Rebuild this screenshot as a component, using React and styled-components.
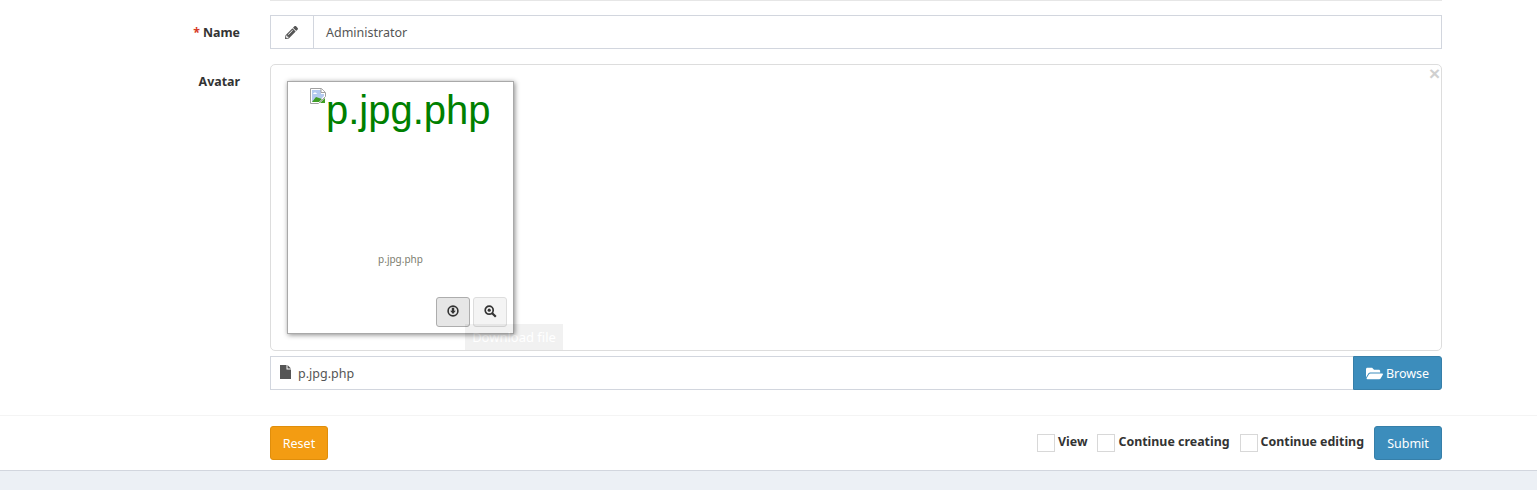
import React from "react";
import styled, { createGlobalStyle } from "styled-components";
import { FaPencilAlt, FaFolderOpen } from "react-icons/fa";

const Global = createGlobalStyle`
  html, body { margin: 0; padding: 0; background: #ecf0f5; }
  body { font-family: "Noto Sans", "Liberation Sans", sans-serif; font-size: 13px; color: #333; overflow: hidden; }
`;

const Panel = styled.form`
  background: #fff;
  height: 470px;
  border-bottom: 1px solid #d2d6de;
  display: flex;
  flex-direction: column;
`;
const Body = styled.div`
  height: 415px;
  padding-right: 95px;
  box-sizing: border-box;
  display: flex;
  flex-direction: column;
`;
const TopRule = styled.div`
  height: 1px;
  margin-left: 270px;
  background: #e6e6e6;
  margin-bottom: 14px;
`;
const Row = styled.div`
  display: flex;
  margin-bottom: 15px;
`;
const Label = styled.label`
  width: 240px;
  flex: none;
  margin-right: 30px;
  text-align: right;
  font-weight: 700;
  font-size: 12.4px;
  line-height: 18px;
  padding-top: ${p => p.$top}px;
  color: #333;
`;
const Star = styled.span`
  color: #d73925;
  margin-right: 3px;
`;
const Field = styled.div`
  flex: 1;
  min-width: 0;
  display: flex;
  flex-direction: column;
`;
const InputGroup = styled.div`
  display: flex;
  height: 34px;
  box-sizing: border-box;
  border: 1px solid #d2d6de;
`;
const Addon = styled.span`
  width: 43px;
  box-sizing: border-box;
  padding-right: 2px;
  flex: none;
  display: flex;
  align-items: center;
  justify-content: center;
  border-right: 1px solid #d2d6de;
  color: #555;
  font-size: 13px;
`;
const InputText = styled.span`
  padding-left: 12px;
  line-height: 33px;
  color: #555;
  font-size: 12.5px;
`;
const Preview = styled.div`
  position: relative;
  height: 287px;
  box-sizing: border-box;
  border: 1px solid #ddd;
  border-radius: 5px;
  padding: 16px 0 0 16px;
  margin-bottom: 5px;
`;
const Close = styled.span`
  position: absolute;
  top: -2px;
  right: 1px;
  font-family: "Liberation Sans", sans-serif;
  font-size: 19px;
  font-weight: 700;
  line-height: 15px;
  color: #d0d0d0;
  height: 15px;
  display: block;
  padding-top: 3px;
`;
const Thumb = styled.div`
  width: 227px;
  height: 253px;
  box-sizing: border-box;
  background: #fff;
  border: 1px solid #a9a9a9;
  box-shadow: 1px 1px 5px 0 #8c8c8c;
  position: relative;
  display: flex;
  flex-direction: column;
  align-items: center;
`;
const BrokenWrap = styled.div`
  height: 160px;
  width: 100%;
  box-sizing: border-box;
  padding-left: 22px;
  margin-top: 5px;
  display: flex;
  justify-content: flex-start;
  font-family: "Liberation Sans", Arial, sans-serif;
  font-size: 40px;
  line-height: 46px;
  color: #008000;
`;
const BrokenIcon = styled.svg`
  width: 16px;
  height: 16px;
  flex: none;
  margin-top: 1px;
`;
const Caption = styled.div`
  margin-top: 5px;
  font-size: 10px;
  line-height: 15px;
  color: #7d7d70;
`;
const Actions = styled.div`
  position: absolute;
  right: 6px;
  bottom: 6px;
  display: flex;
  gap: 3px;
`;
const IconButton = styled.button`
  width: ${p => p.$w}px;
  height: 30px;
  padding: 0 0 2px;
  display: flex;
  align-items: center;
  justify-content: center;
  border-radius: 3px;
  border: 1px solid ${p => (p.$active ? "#adadad" : "#ddd")};
  background: ${p => (p.$active ? "#e6e6e6" : "#f4f4f4")};
  color: #333;
`;
const Tip = styled.div`
  position: absolute;
  left: 194px;
  top: 259px;
  width: 98px;
  height: 26px;
  background: #000;
  opacity: 0.05;
  color: #fff;
  font-size: 13px;
  line-height: 26px;
  text-align: center;
`;
const FileRow = styled.div`
  display: flex;
  height: 34px;
`;
const Caption2 = styled.div`
  flex: 1;
  box-sizing: border-box;
  border: 1px solid #d2d6de;
  border-right: 0;
  display: flex;
  align-items: center;
  padding-left: 9px;
  gap: 7px;
  color: #555;
  font-size: 12.5px;
`;
const FileIcon = styled.svg`
  width: 11px;
  height: 14px;
  flex: none;
  margin-bottom: 2px;
`;
const Browse = styled.button`
  width: 89px;
  box-sizing: border-box;
  background: #3c8dbc;
  border: 1px solid #367fa9;
  border-radius: 0 3px 3px 0;
  color: #fff;
  font: inherit;
  font-size: 12.5px;
  display: flex;
  align-items: center;
  justify-content: center;
  gap: 3px;
  padding: 0;
`;
const Footer = styled.div`
  border-top: 1px solid #f4f4f4;
  flex: 1;
  padding: 10px 95px 0 270px;
  display: flex;
  justify-content: space-between;
  align-items: flex-start;
`;
const Btn = styled.button`
  height: 34px;
  width: ${p => p.$w}px;
  border-radius: 3px;
  border: 1px solid ${p => p.$border};
  background: ${p => p.$bg};
  color: #fff;
  font: inherit;
  font-size: 12.5px;
  padding: 0;
`;
const Right = styled.div`
  display: flex;
  align-items: flex-start;
`;
const Check = styled.label`
  display: flex;
  align-items: flex-start;
  margin-right: 10px;
  margin-top: 8px;
  font-weight: 700;
  font-size: 12.4px;
  line-height: 16px;
  color: #333;
`;
const Box = styled.span`
  width: 16px;
  height: 16px;
  border: 1px solid #d8d8d8;
  margin-right: 3px;
  display: block;
`;

export default function App() {
  return (
    <>
      <Global />
      <Panel>
        <Body>
          <TopRule />
          <Row>
            <Label $top={9}><Star>*</Star>Name</Label>
            <Field>
              <InputGroup>
                <Addon><FaPencilAlt /></Addon>
                <InputText>Administrator</InputText>
              </InputGroup>
            </Field>
          </Row>
          <Row>
            <Label $top={9}>Avatar</Label>
            <Field>
              <Preview>
                <Close>×</Close>
                <Thumb>
                  <BrokenWrap>
                    <BrokenIcon viewBox="0 0 16 16">
                      <path d="M.5.5h11l4 4v4l-7 7H.5z" fill="#fff" stroke="#a0a0a0" />
                      <path d="M2 2h9v4h3v2l-6 6H2z" fill="#b4caef" />
                      <path d="M2 14l4-5 3 1 3 1-3 3z" fill="#3f9d25" />
                      <path d="M15 10l-5 5h5z" fill="#3f9d25" />
                      <path d="M3 6c1-2 3-2 4 0z" fill="#fff" />
                      <path d="M11 .5v4h4" fill="#fff" stroke="#a0a0a0" />
                    </BrokenIcon>
                    p.jpg.php
                  </BrokenWrap>
                  <Caption>p.jpg.php</Caption>
                  <Actions>
                    <IconButton type="button" $w={34} $active>
                      <svg width="12" height="12" viewBox="0 0 12 12">
                        <circle cx="6" cy="6" r="4.9" fill="none" stroke="#333" strokeWidth="1.6" />
                        <path d="M4.8 2.8h2.4v3h1.6L6 9 3.2 5.8h1.6z" fill="#333" />
                      </svg>
                    </IconButton>
                    <IconButton type="button" $w={34}>
                      <svg width="13" height="13" viewBox="0 0 13 13">
                        <circle cx="5.2" cy="5.2" r="4" fill="none" stroke="#333" strokeWidth="1.7" />
                        <circle cx="5.2" cy="5.2" r="1.6" fill="#333" />
                        <path d="M8.2 8.2L11.8 11.8" stroke="#333" strokeWidth="2.2" />
                      </svg>
                    </IconButton>
                  </Actions>
                </Thumb>
                <Tip>Download file</Tip>
              </Preview>
              <FileRow>
                <Caption2>
                  <FileIcon viewBox="0 0 11 14">
                    <path d="M0 0h6.5v4.5H11V14H0z" fill="#555" />
                    <path d="M7.5 0L11 3.5H7.5z" fill="#555" />
                  </FileIcon>
                  p.jpg.php
                </Caption2>
                <Browse type="button"><FaFolderOpen size={17} />Browse</Browse>
              </FileRow>
            </Field>
          </Row>
        </Body>
        <Footer>
          <Btn type="button" $w={58} $bg="#f39c12" $border="#e08e0b">Reset</Btn>
          <Right>
            <Check><Box />View</Check>
            <Check><Box />Continue creating</Check>
            <Check><Box />Continue editing</Check>
            <Btn type="button" $w={68} $bg="#3c8dbc" $border="#367fa9">Submit</Btn>
          </Right>
        </Footer>
      </Panel>
    </>
  );
}
